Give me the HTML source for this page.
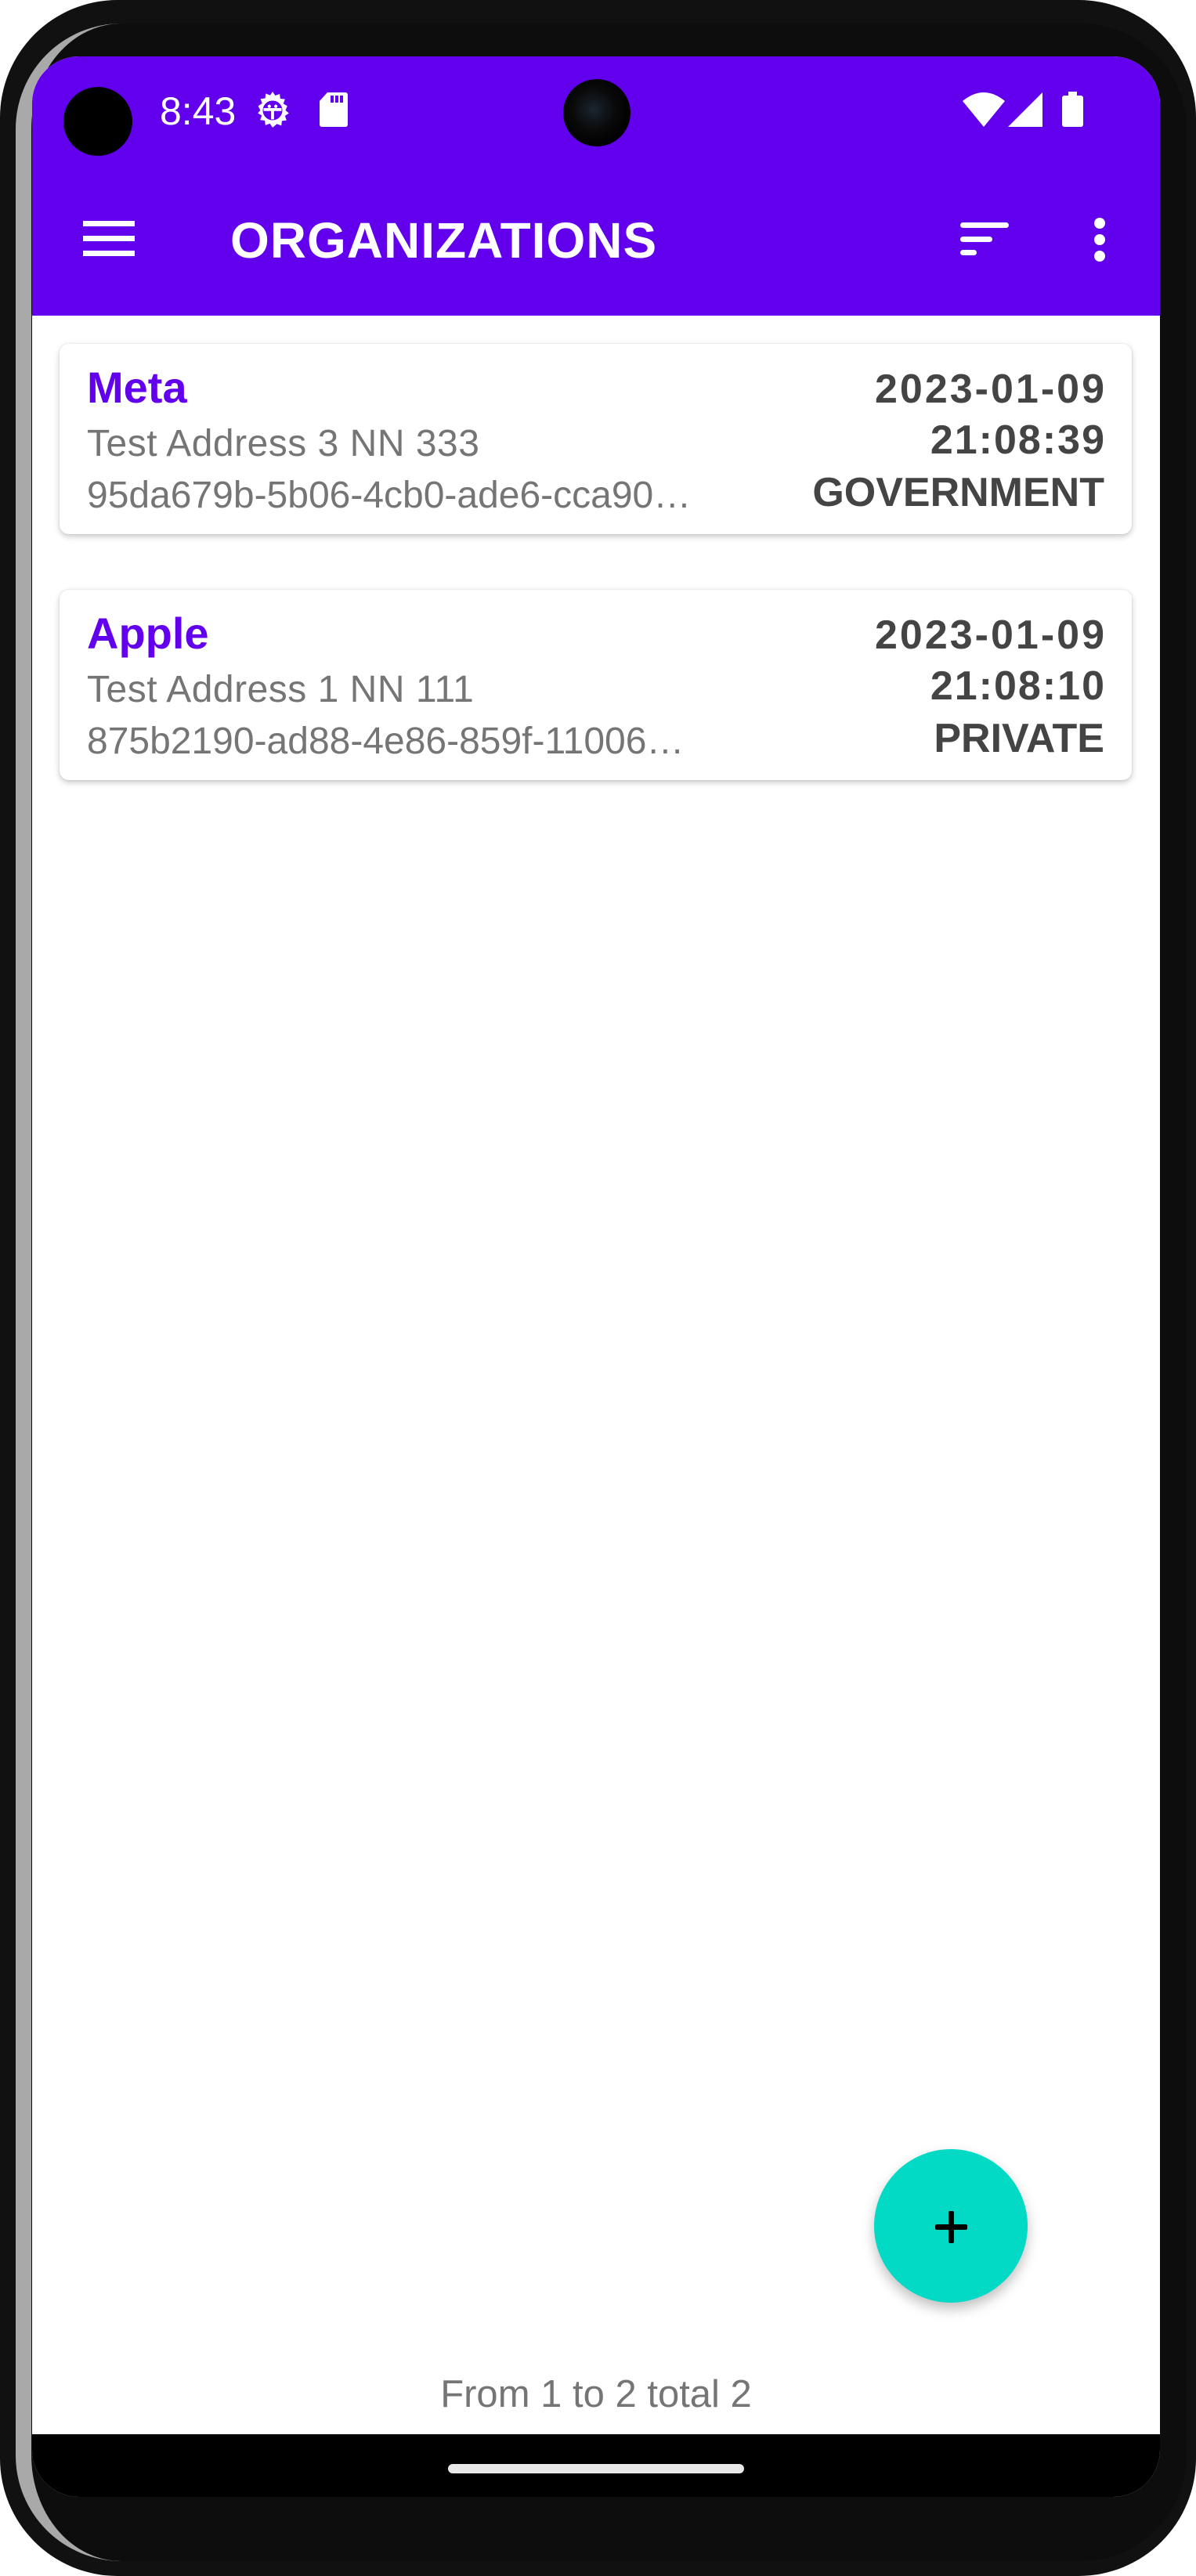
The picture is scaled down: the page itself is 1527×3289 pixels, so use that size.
<!DOCTYPE html>
<html><head><meta charset="utf-8"><style>
*{margin:0;padding:0;box-sizing:border-box}
html,body{width:1527px;height:3289px;background:#fff;overflow:hidden;font-family:"Liberation Sans",sans-serif}
.frame{position:absolute;left:0;top:0;width:1527px;height:3289px;background:#111;border-radius:150px;}
.bezel{position:absolute;left:20px;top:30px;width:1495px;height:3240px;background:#0d0d0d;border-radius:135px;border-left:20px solid #a9a9a9;}
.screen{position:absolute;left:41px;top:72px;width:1440px;height:3116px;background:#fff;border-radius:60px;overflow:hidden}
.appbar{position:absolute;left:0;top:0;width:1440px;height:331px;background:#6200EE}
.nav{position:absolute;left:0;top:3036px;width:1440px;height:80px;background:#000}
.abs{position:absolute}
.card{position:absolute;left:35px;width:1369px;height:243px;background:#fff;border-radius:12px;box-shadow:0 3px 8px rgba(0,0,0,.22),0 0 2px rgba(0,0,0,.1)}
.name{position:absolute;left:35px;top:26px;font-size:56px;font-weight:bold;color:#6200EE;line-height:60px}
.addr{position:absolute;left:35px;font-size:48px;color:#757575;line-height:50px;white-space:nowrap}
.r{position:absolute;right:35px;font-size:52px;font-weight:bold;color:#444;line-height:56px;text-align:right;white-space:nowrap}
</style></head><body>
<div class="frame"></div>
<div class="bezel"></div>
<div class="screen">
 <div class="appbar">
  <div class="abs" style="left:40px;top:39px;width:88px;height:88px;border-radius:50%;background:#000"></div>
  <div class="abs" style="left:163px;top:40px;font-size:50px;color:#fff;line-height:60px">8:43</div>
  <svg class="abs" style="left:282px;top:45px" width="50" height="50" viewBox="0 0 24 24"><path fill="#fff" d="M12 1l1.5 2.2 2.5-.9.3 2.6 2.6.3-.9 2.5L20.2 9l-1 2.4 1.9 1.6-2.2 1.5.9 2.5-2.6.3-.3 2.6-2.5-.9L12 21l-1.5-2.2-2.5.9-.3-2.6-2.6-.3.9-2.5L3.8 13l1.4-1.6L4 9l2.2-1.5-.9-2.5 2.6-.3.3-2.6 2.5.9z" transform="translate(12 11) scale(1.1) translate(-12 -11)"/><circle cx="12" cy="11.5" r="6" fill="#6200EE"/><path d="M6.5 11h11M12 11v6" stroke="#fff" stroke-width="1.8"/><circle cx="10" cy="9" r="1" fill="#fff"/><circle cx="14" cy="9" r="1" fill="#fff"/></svg>
  <svg class="abs" style="left:367px;top:46px" width="36" height="44" viewBox="0 0 36 44"><path fill="#fff" d="M10 0H33a3 3 0 0 1 3 3V41a3 3 0 0 1-3 3H3a3 3 0 0 1-3-3V11z"/><rect x="14" y="4" width="4" height="9" fill="#6200EE"/><rect x="20" y="4" width="4" height="9" fill="#6200EE"/><rect x="26" y="4" width="4" height="9" fill="#6200EE"/></svg>
  <div class="abs" style="left:678px;top:29px;width:86px;height:86px;border-radius:50%;background:radial-gradient(circle at 45% 45%,#1b2530 0,#0a0a0a 40%,#000 70%)"></div>
  <svg class="abs" style="left:1188px;top:45px" width="54" height="45" viewBox="0 0 54 45"><path fill="#fff" d="M0 12Q27-10 54 12L27 45z"/></svg>
  <svg class="abs" style="left:1246px;top:46px" width="44" height="44"><path fill="#fff" d="M44 0V44H0z"/></svg>
  <svg class="abs" style="left:1315px;top:45px" width="27" height="45"><rect x="8" y="0" width="11" height="6" fill="#fff"/><rect x="0" y="5" width="27" height="40" rx="3" fill="#fff"/></svg>
  <div class="abs" style="left:65px;top:210px;width:66px;height:7px;background:#fff"></div>
  <div class="abs" style="left:65px;top:229px;width:66px;height:7px;background:#fff"></div>
  <div class="abs" style="left:65px;top:248px;width:66px;height:7px;background:#fff"></div>
  <div class="abs" style="left:253px;top:200px;font-size:64px;font-weight:bold;color:#fff;line-height:70px;letter-spacing:1px">ORGANIZATIONS</div>
  <div class="abs" style="left:1185px;top:212px;width:62px;height:7px;border-radius:4px;background:#fff"></div>
  <div class="abs" style="left:1185px;top:230px;width:41px;height:7px;border-radius:4px;background:#fff"></div>
  <div class="abs" style="left:1185px;top:247px;width:21px;height:7px;border-radius:4px;background:#fff"></div>
  <div class="abs" style="left:1356px;top:206px;width:14px;height:14px;border-radius:50%;background:#fff"></div>
  <div class="abs" style="left:1356px;top:227px;width:14px;height:14px;border-radius:50%;background:#fff"></div>
  <div class="abs" style="left:1356px;top:248px;width:14px;height:14px;border-radius:50%;background:#fff"></div>
 </div>

 <div class="card" style="top:367px">
  <div class="name">Meta</div>
  <div class="addr" style="top:103px;letter-spacing:0.5px">Test Address 3 NN 333</div>
  <div class="addr" style="top:169px">95da679b-5b06-4cb0-ade6-cca90…</div>
  <div class="r" style="top:30px;letter-spacing:3px;margin-right:-3px">2023-01-09</div>
  <div class="r" style="top:95px;letter-spacing:2px;margin-right:-2px">21:08:39</div>
  <div class="r" style="top:162px">GOVERNMENT</div>
 </div>
 <div class="card" style="top:681px">
  <div class="name">Apple</div>
  <div class="addr" style="top:103px;letter-spacing:0.5px">Test Address 1 NN 111</div>
  <div class="addr" style="top:169px">875b2190-ad88-4e86-859f-11006…</div>
  <div class="r" style="top:30px;letter-spacing:3px;margin-right:-3px">2023-01-09</div>
  <div class="r" style="top:95px;letter-spacing:2px;margin-right:-2px">21:08:10</div>
  <div class="r" style="top:162px">PRIVATE</div>
 </div>

 <div class="abs" style="left:1075px;top:2672px;width:196px;height:196px;border-radius:50%;background:#03DAC5;box-shadow:0 8px 16px rgba(0,0,0,.25)"></div>
 <div class="abs" style="left:1153px;top:2768px;width:41px;height:7px;background:#000;border-radius:2px"></div>
 <div class="abs" style="left:1170px;top:2751px;width:7px;height:41px;background:#000;border-radius:2px"></div>

 <div class="abs" style="left:0;top:2957px;width:1440px;text-align:center;font-size:49px;color:#757575;line-height:56px">From 1 to 2 total 2</div>
 <div class="nav"><div class="abs" style="left:531px;top:38px;width:378px;height:12px;border-radius:6px;background:#e8e8e8"></div></div>
</div>
</body></html>
